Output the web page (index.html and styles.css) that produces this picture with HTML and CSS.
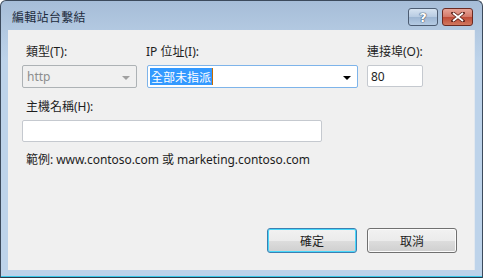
FILE: index.html
```html
<!DOCTYPE html>
<html>
<head>
<meta charset="utf-8">
<link rel="stylesheet" href="styles.css">
</head>
<body>
<div class="window">
  <div class="titlebar">
    <div class="title">編輯站台繫結</div>
    <div class="caption-buttons">
      <div class="cap-btn help">?</div>
      <div class="cap-btn close">
        <svg width="14" height="10" viewBox="0 0 14 10"><path d="M2 1 L12 9 M12 1 L2 9" stroke="#5a2018" stroke-width="3.4" stroke-linecap="square"/><path d="M2 1 L12 9 M12 1 L2 9" stroke="#fff" stroke-width="1.8"/></svg>
      </div>
    </div>
  </div>
  <div class="client">
    <div class="row-top">
      <div class="field f-type">
        <label class="lbl">類型(<u>T</u>):</label>
        <div class="select disabled"><span>http</span><span class="arrow grey"></span></div>
      </div>
      <div class="field f-ip">
        <label class="lbl">IP 位址(<u>I</u>):</label>
        <div class="select focus"><span class="sel">全部未指派</span><span class="caret"></span><span class="spacer"></span><span class="arrow"></span></div>
      </div>
      <div class="field f-port">
        <label class="lbl">連接埠(<u>O</u>):</label>
        <div class="input port">80</div>
      </div>
    </div>
    <div class="field f-host">
      <label class="lbl">主機名稱(<u>H</u>):</label>
      <div class="input host"></div>
    </div>
    <div class="example">範例: www.contoso.com 或 marketing.contoso.com</div>
    <div class="buttons">
      <div class="btn default">確定</div>
      <div class="btn">取消</div>
    </div>
  </div>
  <div class="bottom-line"></div>
</div>
</body>
</html>
```
FILE: styles.css
```css
* { box-sizing: border-box; }
html, body { margin: 0; padding: 0; background: #ffffff; }
body {
  font-family: "Noto Sans", "Noto Sans CJK TC", sans-serif;
  font-size: 12px;
  color: #1e1e1e;
}
.window {
  width: 483px;
  height: 278px;
  border: 1px solid #3c4a5c;
  border-bottom: none;
  border-radius: 6px 6px 0 0;
  background: linear-gradient(180deg, #a6bdd8 0px, #b3c9e1 30px, #bdd3ea 60px, #bdd3ea 100%);
  display: flex;
  flex-direction: column;
  overflow: hidden;
}
.titlebar {
  height: 29px;
  display: flex;
  align-items: center;
  justify-content: space-between;
  padding: 0 9px 0 11px;
}
.title {
  color: #1c2b3c;
  font-family: "Noto Sans CJK TC", sans-serif;
  font-size: 12px;
  margin-top: 2px;
  letter-spacing: 0.3px;
}
.caption-buttons { display: flex; gap: 4px; margin-top: 3px; }
.cap-btn {
  height: 18px;
  border: 1px solid #4c5c72;
  border-radius: 3px;
  display: flex;
  align-items: center;
  justify-content: center;
}
.help {
  width: 30px;
  background: linear-gradient(180deg, #d6e3f1 0%, #b7cbe2 50%, #9db6d3 51%, #b5cbe3 100%);
  color: #ffffff;
  font-family: "DejaVu Sans", sans-serif;
  font-weight: bold;
  font-size: 13px;
  text-shadow: 0 0 1px #3c4d63, 0 0 1px #3c4d63, 0 0 1px #3c4d63;
}
.close {
  width: 31px;
  border-color: #6b2a22;
  background: linear-gradient(180deg, #e8a497 0%, #d37868 50%, #bf4a36 51%, #d1785f 100%);
}
.client {
  margin: 0 7px;
  height: 240px;
  background: #f0f0f0;
  padding: 13px 14px 0 14px;
  display: flex;
  flex-direction: column;
  border-right: 1px solid #e2e8ef;
}
.row-top { display: flex; gap: 10px; }
.f-type { width: 115px; }
.f-ip { width: 211px; }
.f-port { width: 56px; margin-left: -1px; }
.lbl {
  display: block;
  padding-left: 4px;
  height: 20px;
  line-height: 18px;
  margin-bottom: 2px;
  white-space: nowrap;
}
.f-ip .lbl { padding-left: 0; margin-left: -1px; }
.f-port .lbl { padding-left: 0; }
.lbl u { text-decoration: none; }
.select, .input {
  height: 23px;
  border: 1px solid #abadb3;
  border-radius: 2px;
  background: #fff;
  display: flex;
  align-items: center;
  padding: 0 6px 0 3px;
}
.select.disabled {
  background: #f0f0f0;
  border-color: #adb2b5;
  color: #8d8d8d;
  justify-content: space-between;
  padding-left: 4px;
}
.select.focus {
  border-color: #7eb4ea;
  padding-left: 2px;
}
.sel {
  background: #3399ff;
  color: #fff;
  font-family: "Noto Sans CJK TC", sans-serif;
  line-height: 17px;
  padding: 0 1px;
}
.caret { width: 1px; height: 17px; background: #c86c00; }
.spacer { flex: 1; }
.arrow {
  width: 0; height: 0;
  border-left: 4px solid transparent;
  border-right: 4px solid transparent;
  border-top: 4px solid #000;
  margin-top: 2px;
}
.arrow.grey { border-top-color: #a0a0a0; }
.input.port { height: 22px; padding-left: 3px; border-color: #c5c9cf; }
.f-host { margin-top: 10px; width: 300px; }
.f-host .lbl { height: 20px; }
.input.host { height: 22px; border-color: #c5c9cf; }
.example { margin-top: 9px; padding-left: 4px; height: 18px; line-height: 18px; letter-spacing: -0.05px; }
.buttons {
  margin-top: auto;
  margin-bottom: 17px;
  display: flex;
  justify-content: flex-end;
  gap: 10px;
  padding-right: 3px;
}
.btn {
  width: 90px;
  height: 25px;
  border: 1px solid #707070;
  border-radius: 3px;
  background: linear-gradient(180deg, #f2f2f2 0%, #ebebeb 50%, #dddddd 51%, #cfcfcf 100%);
  display: flex;
  align-items: center;
  justify-content: center;
  font-family: "Noto Sans CJK TC", sans-serif;
  box-shadow: inset 0 0 0 1px #fbfbfb;
}
.btn.default {
  border-color: #3c7fb1;
  box-shadow: inset 0 0 0 1px #48d8fb;
}
.bottom-line {
  margin-top: auto;
  height: 2px;
  border-top: 1px solid #3ac8e8;
  background: #2b3a4a;
}
```
